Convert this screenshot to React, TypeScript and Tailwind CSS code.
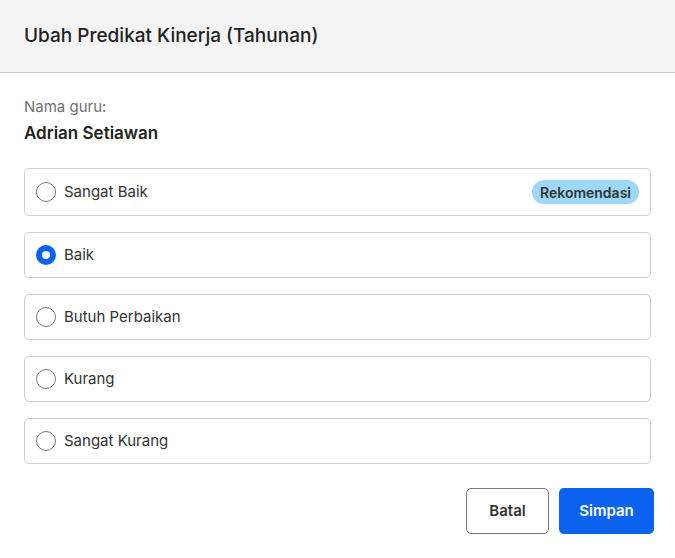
const options = [
  { label: 'Sangat Baik', recommended: true },
  { label: 'Baik', checked: true },
  { label: 'Butuh Perbaikan' },
  { label: 'Kurang' },
  { label: 'Sangat Kurang' },
]

type OptionProps = {
  label: string
  recommended?: boolean
  checked?: boolean
}

const RadioDot = ({ checked }: { checked?: boolean }) =>
  checked ? (
    <span className="flex h-5 w-5 shrink-0 items-center justify-center rounded-full bg-[#0b62ef]">
      <span className="h-2 w-2 rounded-full bg-white" />
    </span>
  ) : (
    <span className="h-5 w-5 shrink-0 rounded-full border border-[#7a7a7a] bg-white" />
  )

const Option = ({ label, recommended, checked }: OptionProps) => (
  <label
    className={`flex items-center justify-between rounded-[5px] border border-[#cfcfcf] bg-white px-[11px] ${
      recommended ? 'h-[48px]' : 'h-[46px]'
    }`}
  >
    <span className="flex items-center gap-2">
      <RadioDot checked={checked} />
      <span className="text-[15px] text-[#333333]">{label}</span>
    </span>
    {recommended && (
      <span className="flex h-6 items-center rounded-full bg-[#9dd7fa] px-2 text-[14px] font-semibold text-[#333333]">
        Rekomendasi
      </span>
    )}
  </label>
)

export default function App() {
  return (
    <div
      className="h-[558px] w-[675px] bg-white"
      style={{ fontFamily: 'Inter, "Noto Sans", sans-serif' }}
    >
      <header className="flex h-[73px] items-center border-b border-[#cccccc] bg-[#f4f4f4] px-6">
        <h1 className="text-[19px] font-medium text-[#222222]">
          Ubah Predikat Kinerja (Tahunan)
        </h1>
      </header>

      <section className="px-6 pt-6">
        <p className="text-[15px] leading-5 text-[#707070]">Nama guru:</p>
        <p className="mt-1 text-[17px] font-semibold leading-6 text-[#222222]">
          Adrian Setiawan
        </p>

        <div className="mt-[23px] flex flex-col gap-4">
          {options.map((o) => (
            <Option key={o.label} {...o} />
          ))}
        </div>
      </section>

      <section className="mt-6 flex justify-end gap-[10px] pr-[21px]">
        <button className="h-[46px] w-[83px] rounded-[5px] border border-[#7a7a7a] bg-white text-[15px] font-semibold text-[#333333]">
          Batal
        </button>
        <button className="h-[46px] w-[95px] rounded-[5px] bg-[#0b62ef] text-[15px] font-semibold text-white">
          Simpan
        </button>
      </section>
    </div>
  )
}
